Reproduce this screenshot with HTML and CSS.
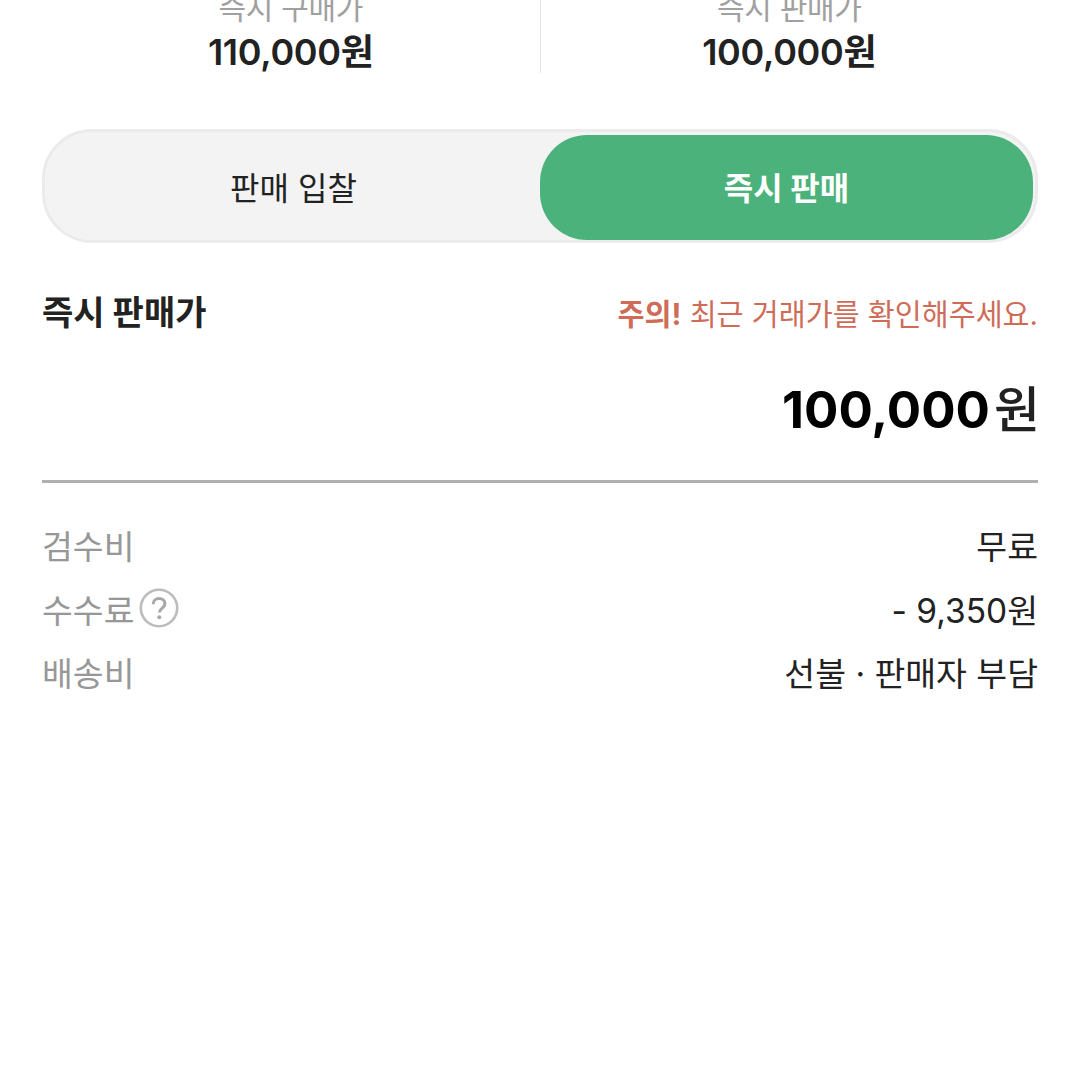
FILE: index.html
```html
<!DOCTYPE html>
<html lang="ko">
<head>
  <meta charset="UTF-8">
  <meta name="viewport" content="width=device-width, initial-scale=1.0">
  <title>즉시 판매</title>
  <link rel="stylesheet" href="styles.css">
</head>
<body>
  <section class="price-summary">
    <div class="price-col">
      <span class="price-label">즉시 구매가</span>
      <strong class="price-value">110,000원</strong>
    </div>
    <div class="price-col">
      <span class="price-label">즉시 판매가</span>
      <strong class="price-value">100,000원</strong>
    </div>
  </section>

  <div class="tabs">
    <button class="tab">판매 입찰</button>
    <button class="tab tab-active">즉시 판매</button>
  </div>

  <div class="sell-head">
    <h2>즉시 판매가</h2>
    <p class="notice"><b>주의!</b> 최근 거래가를 확인해주세요.</p>
  </div>

  <div class="sell-price"><span class="amount">100,000</span><span class="unit">원</span></div>

  <ul class="fees">
    <li><span class="fee-name">검수비</span><span>무료</span></li>
    <li>
      <span class="fee-name">수수료
        <svg class="help" width="40" height="40" viewBox="0 0 40 40" aria-hidden="true">
          <circle cx="20" cy="20" r="18.2" fill="none" stroke="#bcbcbc" stroke-width="2.6"/>
          <path d="M14.2 16.2c0-3.4 2.5-5.6 5.9-5.6 3.3 0 5.8 2 5.8 5 0 2.300-1.200 3.500-2.800 4.700-1.700 1.200-2.600 2.100-2.600 4.100" fill="none" stroke="#a8a8a8" stroke-width="3"/>
          <circle cx="20.300" cy="29.300" r="2" fill="#a8a8a8"/>
        </svg>
      </span>
      <span>- 9,350원</span>
    </li>
    <li><span class="fee-name">배송비</span><span>선불 · 판매자 부담</span></li>
  </ul>
</body>
</html>
```

FILE: styles.css
```css
html, body {
  height: 100%;
  overflow: hidden;
}

body {
  margin: 0;
  background-color: #fff;
  color: #222;
  font-family: Inter, "Noto Sans CJK KR", sans-serif;
}

.price-summary {
  display: flex;
  margin: -14px 42px 56px;
}

.price-col {
  flex: 1;
  display: flex;
  flex-direction: column;
  align-items: center;
}

.price-col + .price-col {
  border-left: 1px solid #e6e6e6;
}

.price-label {
  color: #a0a0a0;
  font-size: 30px;
  line-height: 44px;
  letter-spacing: -0.3px;
}

.price-value {
  margin-top: 2px;
  font-size: 36px;
  font-weight: 600;
  line-height: 41px;
  letter-spacing: -0.3px;
}

.tabs {
  display: flex;
  height: 105px;
  margin: 0 42px;
  padding: 3px 2px 0;
  border: 3px solid #ebebeb;
  border-radius: 50px;
  background-color: #f3f3f3;
}

.tab {
  flex: 1;
  padding: 0 0 3px;
  border: none;
  border-radius: 47px;
  background: none;
  color: #222;
  font-family: inherit;
  font-size: 32px;
}

.tab-active {
  background-color: #4bb27b;
  color: #fff;
  font-weight: 700;
}

.sell-head {
  display: flex;
  justify-content: space-between;
  align-items: center;
  margin: 46px 42px 0;
}

.sell-head h2 {
  margin: 0;
  font-size: 34px;
  font-weight: 700;
  line-height: 48px;
}

.notice {
  margin: 0 0 3px;
  color: #cf6c58;
  font-size: 29.3px;
}

.sell-price {
  display: flex;
  justify-content: flex-end;
  align-items: center;
  gap: 4px;
  margin: 37px 42px 0;
  padding-bottom: 34px;
  border-bottom: 3px solid #b0b0b0;
  line-height: 72px;
}

.amount {
  color: #000;
  font-size: 51px;
  font-weight: 700;
}

.unit {
  margin-right: -2px;
  font-size: 50px;
  font-weight: 500;
}

.fees {
  margin: 30px 42px 0;
  padding: 0;
  list-style: none;
  font-size: 33.5px;
}

.fees li {
  display: flex;
  justify-content: space-between;
  align-items: center;
  height: 63.5px;
}

.fee-name {
  display: flex;
  align-items: center;
  gap: 5px;
  color: #979797;
}
```
